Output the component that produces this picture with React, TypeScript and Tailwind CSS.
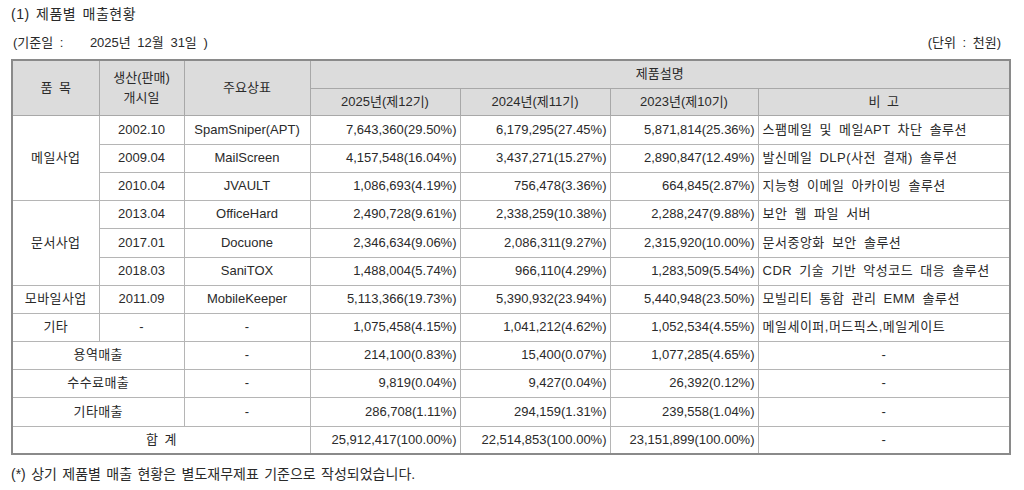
import React from "react";

const F = { fontFamily: '"Liberation Sans", "Noto Sans CJK KR", sans-serif' };

type Row = {
  cat?: { text: string; span: number };
  date?: string;
  brand?: string;
  label2?: string;
  total?: boolean;
  v25: string;
  v24: string;
  v23: string;
  note: string;
  h: number;
};

const rows: Row[] = [
  { cat: { text: "메일사업", span: 3 }, date: "2002.10", brand: "SpamSniper(APT)", v25: "7,643,360(29.50%)", v24: "6,179,295(27.45%)", v23: "5,871,814(25.36%)", note: "스팸메일 및 메일APT 차단 솔루션", h: 29 },
  { date: "2009.04", brand: "MailScreen", v25: "4,157,548(16.04%)", v24: "3,437,271(15.27%)", v23: "2,890,847(12.49%)", note: "발신메일 DLP(사전 결재) 솔루션", h: 28 },
  { date: "2010.04", brand: "JVAULT", v25: "1,086,693(4.19%)", v24: "756,478(3.36%)", v23: "664,845(2.87%)", note: "지능형 이메일 아카이빙 솔루션", h: 28 },
  { cat: { text: "문서사업", span: 3 }, date: "2013.04", brand: "OfficeHard", v25: "2,490,728(9.61%)", v24: "2,338,259(10.38%)", v23: "2,288,247(9.88%)", note: "보안 웹 파일 서버", h: 28 },
  { date: "2017.01", brand: "Docuone", v25: "2,346,634(9.06%)", v24: "2,086,311(9.27%)", v23: "2,315,920(10.00%)", note: "문서중앙화 보안 솔루션", h: 29 },
  { date: "2018.03", brand: "SaniTOX", v25: "1,488,004(5.74%)", v24: "966,110(4.29%)", v23: "1,283,509(5.54%)", note: "CDR 기술 기반 악성코드 대응 솔루션", h: 28 },
  { cat: { text: "모바일사업", span: 1 }, date: "2011.09", brand: "MobileKeeper", v25: "5,113,366(19.73%)", v24: "5,390,932(23.94%)", v23: "5,440,948(23.50%)", note: "모빌리티 통합 관리 EMM 솔루션", h: 28 },
  { cat: { text: "기타", span: 1 }, date: "-", brand: "-", v25: "1,075,458(4.15%)", v24: "1,041,212(4.62%)", v23: "1,052,534(4.55%)", note: "메일세이퍼,머드픽스,메일게이트", h: 28 },
  { label2: "용역매출", brand: "-", v25: "214,100(0.83%)", v24: "15,400(0.07%)", v23: "1,077,285(4.65%)", note: "-", h: 28 },
  { label2: "수수료매출", brand: "-", v25: "9,819(0.04%)", v24: "9,427(0.04%)", v23: "26,392(0.12%)", note: "-", h: 28 },
  { label2: "기타매출", brand: "-", v25: "286,708(1.11%)", v24: "294,159(1.31%)", v23: "239,558(1.04%)", note: "-", h: 29 },
  { total: true, v25: "25,912,417(100.00%)", v24: "22,514,853(100.00%)", v23: "23,151,899(100.00%)", note: "-", h: 28 },
];

const cell = "border border-[#b5b5b5] p-0 whitespace-nowrap";
const hcell = "border border-[#a8a8a8] bg-[#dcdcdc] p-0 text-center font-normal";

export default function App() {
  return (
    <div className="w-[1024px] h-[490px] bg-white text-[#2a2a2a] overflow-hidden" style={F}>
      <div className="pl-[11px] pt-[5px] text-[14px] leading-[18px] tracking-[0.5px] [word-spacing:2px]">(1) 제품별 매출현황</div>
      <div className="flex justify-between pl-[13px] pr-[23px] mt-[12px] text-[13px] leading-[16px] [word-spacing:3px]">
        <span className="whitespace-pre">(기준일 :    2025년 12월 31일 )</span>
        <span>(단위 : 천원)</span>
      </div>
      <div className="pl-[11px] mt-[8px]">
        <table className="table-fixed border-collapse text-[13px] leading-[16px] border-2 border-[#8a8a8a] [word-spacing:3px]" style={{ width: 998 }}>
          <colgroup>
            <col style={{ width: 87 }} />
            <col style={{ width: 85 }} />
            <col style={{ width: 126 }} />
            <col style={{ width: 150 }} />
            <col style={{ width: 150 }} />
            <col style={{ width: 148 }} />
            <col style={{ width: 252 }} />
          </colgroup>
          <thead>
            <tr className="h-[28px]">
              <th rowSpan={2} className={hcell}>품 목</th>
              <th rowSpan={2} className={hcell}>
                <div className="leading-[20px]">생산(판매)</div>
                <div className="leading-[20px]">개시일</div>
              </th>
              <th rowSpan={2} className={hcell}>주요상표</th>
              <th colSpan={4} className={hcell}>제품설명</th>
            </tr>
            <tr className="h-[27px]">
              <th className={hcell}>2025년(제12기)</th>
              <th className={hcell}>2024년(제11기)</th>
              <th className={hcell}>2023년(제10기)</th>
              <th className={hcell}>비 고</th>
            </tr>
          </thead>
          <tbody>
            {rows.map((r, i) => (
              <tr key={i} style={{ height: r.h }}>
                {r.total ? (
                  <td colSpan={3} className={cell + " text-center"}>합 계</td>
                ) : (
                  <>
                    {r.label2 ? (
                      <td colSpan={2} className={cell + " text-center tracking-[0.4px]"}>{r.label2}</td>
                    ) : (
                      <>
                        {r.cat && (
                          <td rowSpan={r.cat.span} className={cell + " text-center tracking-[0.4px]"}>{r.cat.text}</td>
                        )}
                        <td className={cell + " text-center"}>{r.date}</td>
                      </>
                    )}
                    <td className={cell + " text-center"}>{r.brand}</td>
                  </>
                )}
                <td className={cell + " text-right pr-[3px]"}>{r.v25}</td>
                <td className={cell + " text-right pr-[3px]"}>{r.v24}</td>
                <td className={cell + " text-right pr-[3px]"}>{r.v23}</td>
                <td className={cell + (r.note === "-" ? " text-center" : " text-left pl-[4px] tracking-[0.5px]")}>{r.note}</td>
              </tr>
            ))}
          </tbody>
        </table>
      </div>
      <div className="pl-[11px] mt-[10px] text-[14px] leading-[18px] [word-spacing:1.5px]">(*) 상기 제품별 매출 현황은 별도재무제표 기준으로 작성되었습니다.</div>
    </div>
  );
}
